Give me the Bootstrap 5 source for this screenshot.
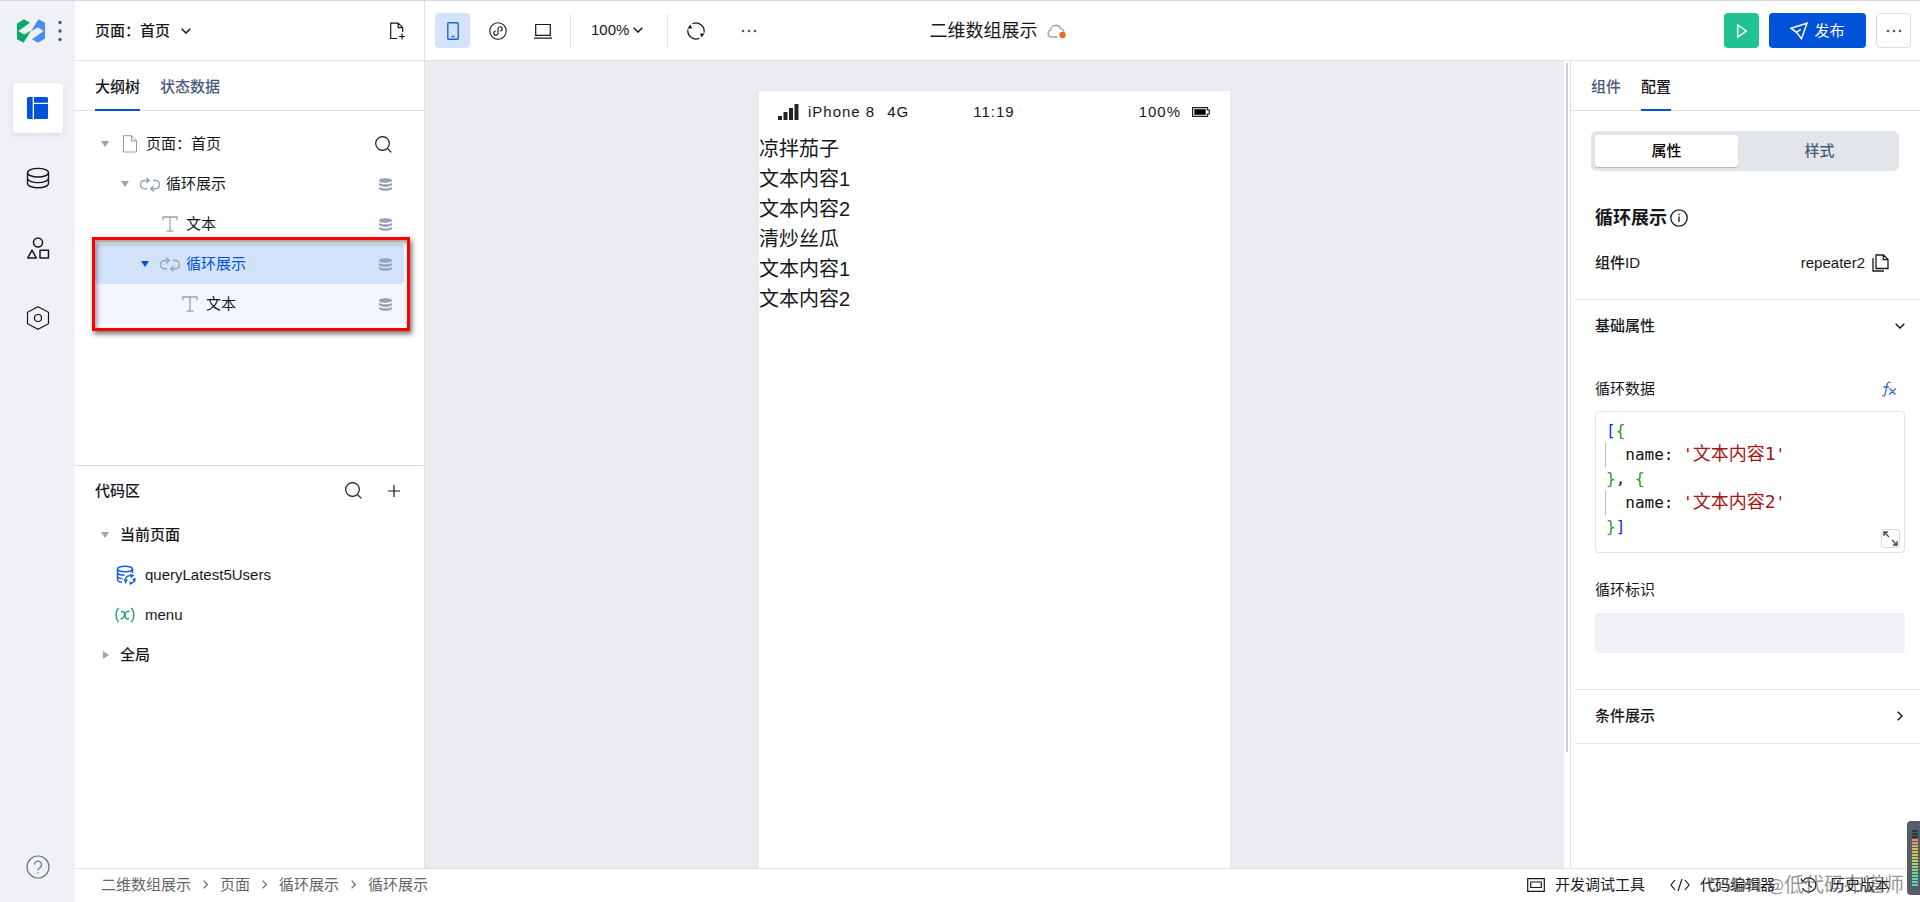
<!DOCTYPE html>
<html lang="zh-CN">
<head>
<meta charset="utf-8">
<meta name="viewport" content="width=device-width, initial-scale=1">
<title>二维数组展示</title>
<link href="https://cdn.jsdelivr.net/npm/bootstrap@5.3.0/dist/css/bootstrap.min.css" rel="stylesheet">
<style>
  :root {
    --ink: #16181d; --soft: #4a5b7a; --mute: #97a3b7; --brand: #0052d9;
    --line: #dfe1e8; --rail: #f0f1f6; --stage: #ebecf0;
  }
  body {
    font-family: "Liberation Sans", "Noto Sans CJK SC", sans-serif;
    font-size: 15px; line-height: 24px; color: var(--ink); background: #fff;
    border-top: 1px solid #d9d9db; overflow: hidden;
  }
  button { font: inherit; }
  a { color: inherit; text-decoration: none; }
  svg { display: block; flex: none; }
  svg:not([fill]) { fill: none; }
  svg:not([stroke]) { stroke: currentColor; }
  .plain { background: none; border: 0; padding: 0; color: inherit; display: flex; align-items: center; }
  .strong { font-weight: 500; }

  .rail { width: 75px; background: var(--rail); flex: none; padding-bottom: 10px; }
  .rail-logo { height: 60px; padding-left: 17px; gap: 13px; }
  .rail-list { gap: 20px; padding-top: 22px; }
  .rail-btn { width: 50px; height: 50px; justify-content: center; border-radius: 4px; }
  .rail-btn.on { background: #fff; color: var(--brand); box-shadow: 0 2px 6px rgba(40, 50, 80, .1); }

  .topbar { height: 60px; border-bottom: 1px solid var(--line); display: grid; grid-template-columns: 1fr auto 1fr; }
  .side-left { width: 350px; flex: none; border-right: 1px solid var(--line); }
  .side-right { width: 350px; flex: none; border-left: 1px solid var(--line); }
  .tool { width: 35px; height: 35px; justify-content: center; border-radius: 4px; }
  .tool.on { background: #d3e3fc; color: #1d62dd; }
  .tool-row { gap: 10px; padding-left: 10px; }
  .zoom-pick { gap: 4px; padding: 0 14px 2px 10px; }
  .rule { width: 1px; height: 34px; background: var(--line); }
  .doc-name { font-size: 18px; gap: 9px; }
  .acts { gap: 10px; padding-right: 9px; }
  .run-btn { background: #20c38f; color: #fff; }
  .pub-btn { width: 97px; height: 35px; border-radius: 4px; background: var(--brand); color: #fff; justify-content: center; gap: 6px; }
  .more-btn { border: 1px solid #dadde8; color: var(--soft); }

  .tabs { height: 50px; padding: 0 20px; gap: 20px; border-bottom: 1px solid var(--line); }
  .tabs button { height: 50px; padding-top: 3px; color: var(--soft); font-weight: 500; border-bottom: 2px solid transparent; border-radius: 0; }
  .tabs button.on { color: var(--ink); border-color: var(--brand); }

  .tree { flex: 6 1 0; padding: 13px 20px 0; min-height: 0; }
  .code { flex: 7 1 0; border-top: 1px solid #d8dbe6; padding: 5px 20px 0; min-height: 0; }
  .node { height: 40px; padding-right: 12px; border-radius: 4px; }
  .lv0 { padding-left: 5px; } .lv1 { padding-left: 25px; } .lv2 { padding-left: 67px; }
  .lv2c { padding-left: 45px; } .lv3 { padding-left: 87px; }
  .node .caret { width: 10px; height: 8px; fill: var(--mute); stroke: none; }
  .glyph { color: var(--mute); }
  .loop { margin: 0 6px 0 10px; }
  .node.on { background: #d3e2fb; color: var(--brand); }
  .node.on .caret { fill: var(--brand); }
  .node.child { background: #f3f6ff; }
  .frame-mark {
    position: absolute; inset: -7px -6px -7px -3px; pointer-events: none;
    border: 3px solid #fe0000; box-shadow: 2px 3px 5px rgba(0, 0, 0, .55), inset 2px 3px 5px rgba(0, 0, 0, .4);
  }

  .stage { background: var(--stage); padding-top: 30px; }
  .phone { width: 471px; background: #fff; }
  .status { height: 43px; padding: 0 20px 2px 19px; letter-spacing: 1px; display: grid; grid-template-columns: 1fr auto 1fr; align-items: center; }
  .phone p { font-size: 20px; line-height: 30px; margin: 0; }
  .track { width: 6px; flex: none; padding: 2px 0 116px 2px; }
  .thumb { width: 2px; height: 100%; background: #d0d0d2; }

  .seg { margin: 20px 21px 0 20px; padding: 4px; height: 40px; background: #e2e5ea; border-radius: 6px; }
  .seg button { flex: 20; justify-content: center; border-radius: 3px; padding-left: 6px; color: var(--soft); font-weight: 500; }
  .seg button.on { flex: 19; padding-left: 0; background: #fff; color: #000; box-shadow: 0 1px 1px #aeb6c4; }
  .about { padding: 35px 31px 0 24px; height: 128px; }
  .block-title { font-size: 18px; font-weight: 700; margin: 0; line-height: 24px; }
  .sect { margin-left: 4px; padding-left: 20px; padding-right: 15px; border-top: 1px solid #e2e4ea; }
  .sect-main { height: 390px; }
  .sect-last { border-bottom: 1px solid #e2e4ea; }
  .sect-head { height: 52px; }
  .editor {
    border: 1px solid #e1e2e8; border-radius: 4px; padding: 7px 10px 12px; height: 142px;
    font-family: "DejaVu Sans Mono", "Noto Sans CJK SC", monospace; font-size: 16px; line-height: 24px; color: #111;
  }
  .editor pre { font: inherit; margin: 0; overflow: visible; }
  .editor code { font: inherit; color: inherit; display: block; }
  .row-code { display: block; height: 24px; }
  .b1 { color: #0431fa; } .b2 { color: #319331; } .str { color: #a31515; } .han { font-size: 18px; line-height: 1; }
  .guide { box-shadow: -1px 0 0 #b8b8b8; }
  .expand { position: absolute; right: 4px; bottom: 4px; width: 19px; height: 19px; border: 1px solid #d5d8e2; border-radius: 3px; background: #fff; justify-content: center; color: #444; }
  .ident { display: block; height: 40px; width: 100%; border: 0; border-radius: 4px; background: var(--rail); padding: 0 10px; }

  .foot { height: 34px; border-top: 1px solid var(--line); }
  .crumbs { color: #666; gap: 12px; padding: 0 0 2px 26px; }
  .foot-tools { padding: 0 30px 2px 0; gap: 25px; }
  .foot-tools button { gap: 10px; }
  .stamp { position: absolute; right: 16px; top: 3px; font-family: Lato, "Noto Sans CJK SC", sans-serif; font-size: 20px; color: rgba(90, 90, 90, .65); white-space: nowrap; pointer-events: none; }
  .meter { position: absolute; right: 0; bottom: 7px; width: 13px; height: 74px; border-radius: 4px 0 0 4px; background: #555c6a; padding: 9px 2px 8px 5px; }
  .meter i { display: block; height: 100%;
    background: repeating-linear-gradient(transparent 0 2px, #555c6a 2px 3px), linear-gradient(#30343c 0 16%, #ef8b5a 16%, #e0c04a 35%, #b8d458 55%, #6fd58a 75%, #4fd6bd); }
</style>
</head>
<body class="d-flex vh-100">

<svg width="0" height="0" class="position-absolute" aria-hidden="true">
  <symbol id="i-down" viewBox="0 0 10 6"><path stroke-width="1.500" d="M.7.700 5 5 9.300.700"/></symbol>
  <symbol id="i-next" viewBox="0 0 5 9"><path stroke-width="1.200" d="m.6.600 3.800 3.900L.6 8.400"/></symbol>
  <symbol id="i-caret" viewBox="0 0 10 8"><path d="M1 1h8L5 7z"/></symbol>
  <symbol id="i-find" viewBox="0 0 17 17"><circle cx="7.500" cy="7.500" r="6.800" stroke-width="1.200"/><path stroke-width="1.200" d="m12.300 12.300 4 4"/></symbol>
  <symbol id="i-dots" viewBox="0 0 16 4"><circle cx="2" cy="2" r="1.300"/><circle cx="8" cy="2" r="1.300"/><circle cx="14" cy="2" r="1.300"/></symbol>
  <symbol id="i-stack" viewBox="0 0 13 13"><path d="M0 2.500C0-.4 13-.4 13 2.500S0 5.400 0 2.500zM0 4.800c2 2 11 2 13 0v2.300c-1 2.400-12 2.400-13 0zM0 8.700c2 2 11 2 13 0v2c-1 2.800-12 2.800-13 0z"/></symbol>
  <symbol id="i-loop" viewBox="0 0 20 15"><path stroke-width="1.400" d="M7 11.700H4.500a4.100 4.100 0 0 1 0-8.200H9M6.300.7 9.300 3.500l-3 2.800M13 3.500h2.500a4.100 4.100 0 0 1 0 8.200H11M13.700 8.900l-3 2.800 3 2.800"/></symbol>
  <symbol id="i-text" viewBox="0 0 16 16"><path stroke-width="1.300" d="M1 4.200V1h14v3.200M8 1v14.200M4.500 15.200h7"/></symbol>
</svg>

<nav class="rail d-flex flex-column align-items-center" aria-label="主导航">
  <div class="rail-logo d-flex align-items-center w-100">
    <svg width="28" height="24" viewBox="0 0 28 24" stroke="none">
      <path fill="#07a96c" d="M0 4.500 7 .3l6 3.400L1.300 12 7 15.500l7-3.800-7.500 12L0 20.300z"/>
      <path fill="#4b8bf4" d="M28 19.500l-7 4.200-6-3.400L26.700 12 21 8.500l-7 3.800 7.500-12L28 3.700z"/>
    </svg>
    <button class="plain" aria-label="菜单"><svg width="4" height="22" viewBox="0 0 4 22" stroke="none" fill="#4a5b7a"><circle cx="2" cy="2.500" r="1.700"/><circle cx="2" cy="11" r="1.700"/><circle cx="2" cy="19.500" r="1.700"/></svg></button>
  </div>
  <div class="rail-list d-flex flex-column">
    <button class="plain rail-btn on" aria-label="页面设计"><svg width="22" height="22" viewBox="0 0 22 22" stroke="none" fill="currentColor"><path d="M1.500 0h4.200v22H1.500A1.500 1.500 0 0 1 0 20.500v-19A1.500 1.500 0 0 1 1.500 0zM7 0h12.500A1.500 1.500 0 0 1 21 1.500v4.300H7zM7 7h14v13.500a1.500 1.500 0 0 1-1.500 1.500H7z"/></svg></button>
    <button class="plain rail-btn" aria-label="数据源"><svg width="24" height="24" viewBox="0 0 24 24" stroke-width="1.400"><ellipse cx="12" cy="6.700" rx="10.500" ry="4.300"/><path d="M1.500 7v10.500c0 2.300 4.700 4.300 10.500 4.300s10.500-2 10.500-4.300V7M1.500 12.300c0 2.300 4.700 4.300 10.500 4.300s10.500-2 10.500-4.300"/></svg></button>
    <button class="plain rail-btn" aria-label="素材"><svg width="24" height="24" viewBox="0 0 24 24" stroke-width="1.500" stroke-linejoin="round"><circle cx="12" cy="6.500" r="4.500"/><path d="M6 14.200 10.300 22H1.700zM14 14.200h8.500V22H14z"/></svg></button>
    <button class="plain rail-btn" aria-label="设置"><svg width="24" height="24" viewBox="0 0 24 24" stroke-width="1.200"><path d="M12 .8 22.500 6.300v11.400L12 23.200 1.500 17.700V6.300z"/><circle cx="12" cy="12" r="3.500"/></svg></button>
  </div>
  <button class="plain rail-btn mt-auto text-secondary" aria-label="帮助"><svg width="24" height="24" viewBox="0 0 24 24" stroke-width="1.200"><circle cx="12" cy="12" r="11"/><path d="M8.500 9.500a3.500 3.500 0 1 1 5.500 3c-1.300.9-2 1.500-2 3M12 17.300v1.500"/></svg></button>
</nav>

<div class="d-flex flex-column flex-grow-1" style="min-width:0">

  <header class="topbar">
    <div class="d-flex">
      <div class="side-left d-flex align-items-center justify-content-between" style="padding:0 18px 0 20px">
        <button class="plain strong" style="gap:11px"><span>页面：首页</span><svg width="10" height="6"><use href="#i-down"/></svg></button>
        <button class="plain" aria-label="新建页面"><svg width="17" height="18" viewBox="0 0 17 18" stroke-width="1.200"><path d="M8 16.500H1.700V1.200h7.500l4.500 4.500V10M9.200 1.200v4.500h4.500M13 11.500v6M10 14.500h6"/></svg></button>
      </div>
      <div class="tool-row d-flex align-items-center">
        <button class="plain tool on" aria-label="手机"><svg width="12" height="18" viewBox="0 0 12 18" stroke-width="1.400"><rect x=".8" y=".8" width="10.400" height="16.400" rx=".8"/><path d="M4.500 14.500h3"/></svg></button>
        <button class="plain tool" aria-label="小程序"><svg width="18" height="18" viewBox="0 0 18 18" stroke-width="1.100"><circle cx="9" cy="9" r="8.200"/><path d="M6.800 9a2.100 2.100 0 1 0 2.200 2.200V6.700a2.100 2.100 0 1 1 2.200 2.200"/></svg></button>
        <button class="plain tool" aria-label="电脑"><svg width="18" height="16" viewBox="0 0 18 16" stroke-width="1.200"><path d="M1.700 1.500h14.600v10.800H1.700zM0 15.200h18"/></svg></button>
        <span class="rule"></span>
        <button class="plain zoom-pick">100% <svg width="10" height="6"><use href="#i-down"/></svg></button>
        <span class="rule"></span>
        <button class="plain tool" aria-label="刷新"><svg width="18" height="18" viewBox="0 0 18 18" stroke-width="1.200"><path d="M5.500 1.700a8.200 8.200 0 0 1 11.500 9M12.500 16.300A8.200 8.200 0 0 1 1 7.300"/><path fill="currentColor" stroke="none" d="M.5 6.500 3.500 2.500 5 6.500zM17.500 11.500l-3 4-1.500-4z"/></svg></button>
        <button class="plain tool ms-2" style="color:var(--soft)" aria-label="更多"><svg width="16" height="4" fill="currentColor" stroke="none"><use href="#i-dots"/></svg></button>
      </div>
    </div>
    <div class="doc-name d-flex align-items-center">二维数组展示
      <svg width="19" height="16" viewBox="0 0 19 16" stroke="#97a3b7" stroke-width="1.300"><path d="M10.500 14H4.500a3.500 3.500 0 0 1-.7-6.900 5 5 0 0 1 9.700-1.500A4 4 0 0 1 17 9.500"/><circle cx="15.500" cy="12" r="3.200" fill="#ed6a2f" stroke="none"/></svg>
    </div>
    <div class="acts d-flex align-items-center justify-content-end">
      <button class="plain tool run-btn" aria-label="预览"><svg width="12" height="16" viewBox="0 0 12 16" stroke-width="1.500"><path d="M1.700 2 10.300 8l-8.600 6z"/></svg></button>
      <button class="plain pub-btn"><svg width="18" height="18" viewBox="0 0 18 18" stroke-width="1.500"><path d="M17 1.200.9 6.200l5.600 4.200 5 6.300zM6.500 10.400l4.300-3"/></svg>发布</button>
      <button class="plain tool more-btn" aria-label="更多"><svg width="16" height="4" fill="currentColor" stroke="none"><use href="#i-dots"/></svg></button>
    </div>
  </header>

  <div class="d-flex flex-grow-1" style="min-height:0">
    <aside class="side-left d-flex flex-column">
      <div class="tabs d-flex"><button class="plain on">大纲树</button><button class="plain">状态数据</button></div>
      <section class="tree">
        <div class="node lv0 d-flex align-items-center">
          <svg class="caret"><use href="#i-caret"/></svg>
          <svg style="margin:0 8px 0 12px" width="16" height="18" viewBox="0 0 16 18" stroke="#999"><path d="M1.500.7h8L14.500 6v11h-13zM9.500.7V6h5"/></svg>
          <span>页面：首页</span>
          <button class="plain ms-auto" aria-label="搜索"><svg width="17" height="17"><use href="#i-find"/></svg></button>
        </div>
        <div class="node lv1 d-flex align-items-center">
          <svg class="caret"><use href="#i-caret"/></svg>
          <svg class="glyph loop" width="20" height="15"><use href="#i-loop"/></svg>
          <span>循环展示</span>
          <svg class="ms-auto" width="13" height="13" stroke="none" fill="#97a3b7"><use href="#i-stack"/></svg>
        </div>
        <div class="node lv2 d-flex align-items-center">
          <svg class="glyph me-2" width="16" height="16"><use href="#i-text"/></svg>
          <span>文本</span>
          <svg class="ms-auto" width="13" height="13" stroke="none" fill="#97a3b7"><use href="#i-stack"/></svg>
        </div>
        <div class="position-relative">
          <div class="node lv2c on d-flex align-items-center">
            <svg class="caret"><use href="#i-caret"/></svg>
            <svg class="glyph loop" width="20" height="15"><use href="#i-loop"/></svg>
            <span>循环展示</span>
            <svg class="ms-auto" width="13" height="13" stroke="none" fill="#97a3b7"><use href="#i-stack"/></svg>
          </div>
          <div class="node lv3 child d-flex align-items-center">
            <svg class="glyph me-2" width="16" height="16"><use href="#i-text"/></svg>
            <span>文本</span>
            <svg class="ms-auto" width="13" height="13" stroke="none" fill="#97a3b7"><use href="#i-stack"/></svg>
          </div>
          <div class="frame-mark"></div>
        </div>
      </section>
      <section class="code">
        <div class="d-flex align-items-center" style="height:40px;padding-right:4px">
          <span class="strong me-auto">代码区</span>
          <button class="plain" aria-label="搜索"><svg width="17" height="17"><use href="#i-find"/></svg></button>
          <button class="plain" style="margin-left:26px" aria-label="新增"><svg width="12" height="12" viewBox="0 0 12 12" stroke-width="1.200"><path d="M6 0v12M0 6h12"/></svg></button>
        </div>
        <div class="node lv0 d-flex align-items-center mt-1"><svg class="caret"><use href="#i-caret"/></svg><span class="strong" style="margin-left:10px">当前页面</span></div>
        <div class="node d-flex align-items-center" style="padding-left:21px">
          <svg style="margin-right:9px" width="20" height="20" viewBox="0 0 20 20" stroke="#1a62dc" stroke-width="1.500"><ellipse cx="9" cy="4" rx="7.500" ry="2.800"/><path d="M1.500 4v10.500c0 1.300 2 2.400 4.500 2.700M16.500 4v4M1.500 7.500c0 1.500 3 2.800 7 2.800M1.500 11c0 1.400 2 2.400 5 2.700"/><path d="M9.500 14.500a4 4 0 0 1 5-3.700M18.500 14a4 4 0 0 1-5 4"/><path fill="#1a62dc" stroke="none" d="m14 8.700 4.500 1.500-3.500 3zM7.500 14l4.500.500-2.500 4.500zM16 14.500l3.500-2v5zM14 20l-.500-4 3 2.500z"/></svg>
          <span>queryLatest5Users</span></div>
        <div class="node d-flex align-items-center" style="padding-left:20px">
          <svg style="margin-right:10px" width="20" height="16" viewBox="0 0 20 16" stroke="#27a56b" stroke-width="1.500"><path d="M3.500 1C.3 5 .3 11 3.500 15M16.500 1c3.200 4 3.200 10 0 14M6 5c2.500-1.500 3 0 4 3.500s2 4.500 4 2.500M14.500 4.500c-2-1-3.500.5-4.800 3.500S6.800 12.500 5.500 11.500"/></svg>
          <span>menu</span></div>
        <div class="node lv0 d-flex align-items-center"><svg class="caret" viewBox="0 0 10 8"><path d="M3 0v8l6-4z"/></svg><span class="strong" style="margin-left:10px">全局</span></div>
      </section>
    </aside>

    <main class="stage flex-grow-1 d-flex justify-content-center">
      <div class="phone">
        <div class="status">
          <span class="d-flex align-items-center"><svg style="margin-right:9px" width="21" height="16" viewBox="0 0 21 16" stroke="none"><path fill="#222" d="M0 12h4v4H0zM5.500 8h4v8h-4zM11 4h4v12h-4zM16.500 0h4v16h-4z"/></svg>iPhone 8<span style="margin-left:12px">4G</span></span>
          <span>11:19</span>
          <span class="d-flex align-items-center justify-content-end">100%<svg style="margin-left:11px" width="18" height="10" viewBox="0 0 18 10"><path stroke="#222" stroke-width="1.200" d="M.6.600h14.900v2.400h1.800v4h-1.800v2.400H.6z"/><path fill="#000" stroke="none" d="M2.300 2.200h11.500v5.600H2.300z"/></svg></span>
        </div>
        <p>凉拌茄子</p><p>文本内容1</p><p>文本内容2</p>
        <p>清炒丝瓜</p><p>文本内容1</p><p>文本内容2</p>
      </div>
    </main>
    <div class="track"><div class="thumb"></div></div>

    <aside class="side-right">
      <div class="tabs d-flex"><button class="plain">组件</button><button class="plain on">配置</button></div>
      <div class="seg d-flex"><button class="plain on">属性</button><button class="plain">样式</button></div>
      <div class="about">
        <div class="d-flex align-items-center" style="gap:3px"><h2 class="block-title">循环展示</h2><svg width="18" height="18" viewBox="0 0 18 18" stroke-width="1.300"><circle cx="9" cy="9" r="8.200"/><path d="M9 7.500V13M9 4.700v1.500"/></svg></div>
        <div class="d-flex align-items-center" style="margin-top:21px"><span class="strong me-auto">组件ID</span><span>repeater2</span>
          <button class="plain" style="margin-left:7px" aria-label="复制"><svg width="17" height="18" viewBox="0 0 17 18" stroke-width="1.300"><path d="M4 1h7.500L16 5.500v9H4zM11.300 1v4.700H16M1 4v13h11"/></svg></button></div>
      </div>
      <section class="sect sect-main">
        <button class="plain strong w-100 justify-content-between sect-head">基础属性<svg width="10" height="6"><use href="#i-down"/></svg></button>
        <div class="d-flex align-items-center justify-content-between" style="margin:25px 8px 10px 0"><span>循环数据</span>
          <button class="plain" aria-label="表达式"><svg width="15" height="16" viewBox="0 0 15 16" stroke="#2b6be0" stroke-width="1.300"><path d="M8.500 1.500C6.500.5 5.500 2 5 4L3.300 12.500C3 14.500 2 15.500.5 14.500M1.500 6h5.500M7.500 7.500l6 6M13.800 7.500l-6.500 6"/></svg></button></div>
        <div class="editor position-relative"><pre><code><span class="row-code"><span class="b1">[</span><span class="b2">{</span></span><span class="row-code guide">  name: <span class="str">'<span class="han">文本内容1</span>'</span></span><span class="row-code"><span class="b2">}</span>, <span class="b2">{</span></span><span class="row-code guide">  name: <span class="str">'<span class="han">文本内容2</span>'</span></span><span class="row-code"><span class="b2">}</span><span class="b1">]</span></span></code></pre>
          <button class="plain expand" aria-label="展开"><svg width="15" height="15" viewBox="0 0 15 15" stroke-width="1.300"><path d="M1 5V1h4M1 1l5 5M14 10v4h-4M14 14 9 9"/></svg></button></div>
        <label for="ident" class="d-block" style="margin:25px 0 11px">循环标识</label>
        <input id="ident" class="ident" type="text">
      </section>
      <section class="sect sect-last">
        <button class="plain strong w-100 justify-content-between" style="height:53px;padding:0 2px 2px 0">条件展示<svg width="6" height="10" viewBox="0 0 6 10" stroke-width="1.500"><path d="M.7.700 5 5 .7 9.300"/></svg></button>
      </section>
    </aside>
  </div>

  <footer class="foot d-flex align-items-center justify-content-between position-relative">
    <nav class="crumbs d-flex align-items-center" aria-label="面包屑">
      <a href="#">二维数组展示</a><svg width="5" height="9"><use href="#i-next"/></svg>
      <a href="#">页面</a><svg width="5" height="9"><use href="#i-next"/></svg>
      <a href="#">循环展示</a><svg width="5" height="9"><use href="#i-next"/></svg>
      <a href="#">循环展示</a>
    </nav>
    <div class="foot-tools d-flex align-items-center">
      <button class="plain"><svg width="18" height="14" viewBox="0 0 18 14" stroke-width="1.200"><path d="M.7.700h16.600v12.600H.7zM3.700 4h10.600v5.500H3.700z"/></svg>开发调试工具</button>
      <button class="plain"><svg width="20" height="12" viewBox="0 0 20 12" stroke-width="1.200"><path d="M5 1 1 6l4 5M15 1l4 5-4 5M12 0 8 12"/></svg>代码编辑器</button>
      <button class="plain" style="gap:13px"><svg width="17" height="16" viewBox="0 0 17 16" stroke-width="1.200"><path d="M3 4a7 7 0 1 1-.5 7M1 1.500l1.500 3.500H6M9 4v4.500l3 2"/></svg>历史版本</button>
    </div>
    <span class="stamp">CSDN @低代码布道师</span>
    <div class="meter"><i></i></div>
  </footer>
</div>

<script src="https://cdn.jsdelivr.net/npm/bootstrap@5.3.0/dist/js/bootstrap.bundle.min.js"></script>
</body>
</html>
